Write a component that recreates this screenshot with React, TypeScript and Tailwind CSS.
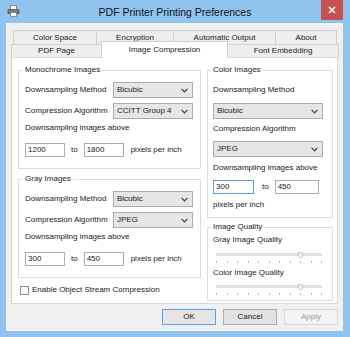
import React from 'react';

const Chevron = () => (
  <svg width="7" height="5" viewBox="0 0 7 5">
    <path d="M0.6 0.8 L3.5 3.8 L6.4 0.8" fill="none" stroke="#3d3d3d" strokeWidth="1.2" />
  </svg>
);

const Select = ({ value, w }: { value: string; w: string }) => (
  <div className={`${w} h-[16px] flex items-center justify-between pl-[3px] pr-[4px] border border-[#acacac] bg-[#e6e6e6]`}>
    <span>{value}</span>
    <Chevron />
  </div>
);

const TextBox = ({ value, w, focus }: { value: string; w: string; focus?: boolean }) => (
  <div className={`${w} h-[14px] flex items-center pl-[2px] bg-white border ${focus ? 'border-[#569de5]' : 'border-[#abadb3]'}`}>
    {value}
  </div>
);

const Group = ({ title, className, children }: { title: string; className: string; children: React.ReactNode }) => (
  <div className={`border border-[#dcdcdc] flex flex-col ${className}`}>
    <div className="-mt-[7px] -ml-[2px] px-[2px] w-fit h-[12px] leading-[12px] bg-white">{title}</div>
    {children}
  </div>
);

const SelectRow = ({ label, value, className }: { label: string; value: string; className: string }) => (
  <div className={`flex items-center h-[16px] ${className}`}>
    <span className="w-[88px]">{label}</span>
    <Select value={value} w="w-[80px]" />
  </div>
);

const Slider = ({ className }: { className: string }) => (
  <div className={`relative w-[106px] ml-[3px] ${className}`}>
    <div className="mt-[2px] h-[3px] border border-[#dadada] bg-[#ebeded]" />
    <div className="mt-[5px] h-[2px] flex justify-between">
      {Array.from({ length: 11 }).map((_, i) => (
        <div key={i} className="w-[1px] h-[2px] bg-[#b0b0b0]" />
      ))}
    </div>
    <svg className="absolute left-[82px] top-[1px]" width="5" height="7" viewBox="0 0 5 7">
      <path d="M0.5 0.5 H4.5 V4.5 L2.5 6.5 L0.5 4.5 Z" fill="#f2f2f2" stroke="#c8c8c8" strokeWidth="1" />
    </svg>
  </div>
);

const Tab = ({ label, className }: { label: string; className: string }) => (
  <div className={`flex items-center justify-center border-t border-l border-[#d0d0d0] bg-[#eeeeee] ${className}`}>
    {label}
  </div>
);

const PrinterIcon = () => (
  <svg width="13" height="12" viewBox="0 0 13 12">
    <rect x="3.5" y="0.5" width="6" height="4" fill="#fff" stroke="#8a8a8a" />
    <rect x="0.5" y="4" width="12" height="5" rx="1" fill="#5e6366" />
    <rect x="1.5" y="5" width="10" height="1.5" fill="#7d8488" />
    <rect x="3.5" y="7.5" width="6" height="4" fill="#fff" stroke="#8a8a8a" />
    <rect x="10" y="5" width="1.5" height="1" fill="#4fb3c9" />
  </svg>
);

export default function App() {
  return (
    <div className="w-[350px] h-[337px] bg-[#90c4ef] flex flex-col font-['Liberation_Sans',Arial,sans-serif] text-[8px] text-[#1a1a1a] leading-[12px]">
      {/* title bar */}
      <div className="h-[23px] grid grid-cols-[1fr_auto_1fr] items-start shrink-0">
        <div className="pl-[7px] pt-[5px]">
          <PrinterIcon />
        </div>
        <div className="pt-[5px] text-[10.5px] leading-[14px] text-[#111]">PDF Printer Printing Preferences</div>
        <div className="justify-self-end mr-[7px] w-[22px] h-[20px] bg-[#c75050] flex items-center justify-center">
          <svg width="8" height="8" viewBox="0 0 8 8">
            <path d="M1 1 L7 7 M7 1 L1 7" stroke="#fff" strokeWidth="1.6" />
          </svg>
        </div>
      </div>

      {/* client */}
      <div className="flex-1 ml-[6px] mr-[7px] mb-[6px] bg-[#f0f0f0] pt-[7px] flex flex-col">
        <div className="flex ml-[7px] h-[14px]">
          <Tab label="Color Space" className="w-[83px]" />
          <Tab label="Encryption" className="w-[77px]" />
          <Tab label="Automatic Output" className="w-[102px]" />
          <Tab label="About" className="w-[62px] border-r" />
        </div>
        <div className="flex ml-[5px] h-[13px] items-start">
          <Tab label="PDF Page" className="w-[90px] h-[13px]" />
          <div className="relative z-10 -mt-[3px] w-[127px] h-[17px] flex items-center justify-center bg-white border-t border-l border-r border-[#d0d0d0]">
            Image Compression
          </div>
          <div className="w-[111px] h-[13px] flex items-center justify-center border-t border-r border-[#d0d0d0] bg-[#eeeeee]">
            Font Embedding
          </div>
        </div>

        {/* panel */}
        <div className="ml-[5px] mr-[5px] h-[247px] bg-white border border-[#d9d9d9] pt-[12px] pl-[6px] flex gap-[6px]">
          <div className="w-[183px] flex flex-col">
            <Group title="Monochrome Images" className="h-[99px] pl-[6px]">
              <SelectRow label="Downsampling Method" value="Bicubic" className="mt-[6px]" />
              <SelectRow label="Compression Algorithm" value="CCITT Group 4" className="mt-[5px]" />
              <div className="mt-[3px] h-[12px]">Downsampling images above</div>
              <div className="mt-[9px] flex items-center h-[14px]">
                <TextBox value="1200" w="w-[40px]" />
                <span className="ml-[6px]">to</span>
                <TextBox value="1800" w="w-[40px] ml-[6px]" />
                <span className="ml-[7px]">pixels per inch</span>
              </div>
            </Group>
            <Group title="Gray Images" className="h-[99px] pl-[6px] mt-[10px]">
              <SelectRow label="Downsampling Method" value="Bicubic" className="mt-[6px]" />
              <SelectRow label="Compression Algorithm" value="JPEG" className="mt-[5px]" />
              <div className="mt-[3px] h-[12px]">Downsampling images above</div>
              <div className="mt-[9px] flex items-center h-[14px]">
                <TextBox value="300" w="w-[40px]" />
                <span className="ml-[6px]">to</span>
                <TextBox value="450" w="w-[40px] ml-[6px]" />
                <span className="ml-[7px]">pixels per inch</span>
              </div>
            </Group>
            <div className="mt-[7px] h-[10px] flex items-center ml-[2px]">
              <div className="w-[9px] h-[9px] border border-[#8f8f8f] bg-white" />
              <span className="ml-[3px]">Enable Object Stream Compression</span>
            </div>
          </div>

          <div className="w-[126px] flex flex-col">
            <Group title="Color Images" className="h-[148px] pl-[5px]">
              <div className="mt-[8px] h-[12px]">Downsampling Method</div>
              <div className="mt-[7px]">
                <Select value="Bicubic" w="w-[110px]" />
              </div>
              <div className="mt-[4px] h-[12px]">Compression Algorithm</div>
              <div className="mt-[6px]">
                <Select value="JPEG" w="w-[110px]" />
              </div>
              <div className="mt-[5px] h-[12px]">Downsampling images above</div>
              <div className="mt-[6px] flex items-center h-[14px]">
                <TextBox value="300" w="w-[41px]" focus />
                <span className="ml-[8px]">to</span>
                <TextBox value="450" w="w-[44px] ml-[6px]" />
              </div>
              <div className="mt-[5px] h-[12px]">pixels per inch</div>
            </Group>
            <Group title="Image Quality" className="h-[74px] pl-[5px] mt-[9px]">
              <div className="mt-[1px] h-[12px]">Gray Image Quality</div>
              <Slider className="mt-[5px]" />
              <div className="mt-[4px] h-[12px]">Color Image Quality</div>
              <Slider className="mt-[4px]" />
            </Group>
          </div>
        </div>

        {/* buttons */}
        <div className="mt-[5px] mr-[5px] flex justify-end gap-[7px]">
          <button className="w-[54px] h-[16px] border border-[#5a9fe0] bg-[#e5e5e5] leading-[14px]">OK</button>
          <button className="w-[54px] h-[16px] border border-[#adadad] bg-[#e1e1e1] leading-[14px]">Cancel</button>
          <button className="w-[54px] h-[16px] border border-[#d9d9d9] bg-[#f4f4f4] text-[#9a9a9a] leading-[14px]">Apply</button>
        </div>
      </div>
    </div>
  );
}
